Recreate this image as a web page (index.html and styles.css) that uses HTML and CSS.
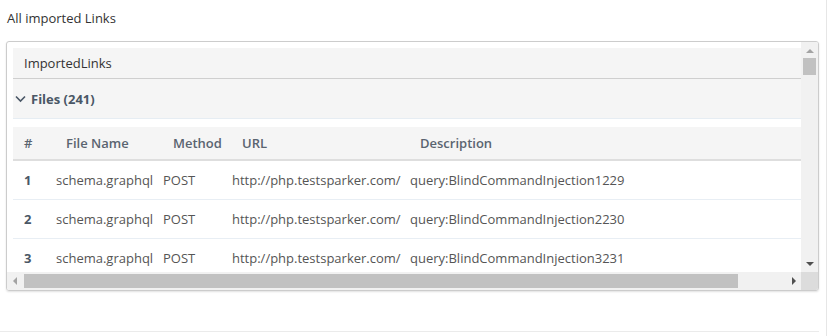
FILE: index.html
```html
<!DOCTYPE html>
<html lang="en">
  <head>
    <meta charset="UTF-8" />
    <title>All imported Links</title>
    <link rel="stylesheet" href="styles.css">
  </head>
  <body>
    <div class="page">
      <div class="page-title">All imported Links</div>

      <!-- Imported links panel -->
      <div class="panel">
        <div class="panel-view">
          <div class="panel-head">ImportedLinks</div>
          <div class="group-row">
            <svg class="chevron" width="11" height="8" viewBox="0 0 11 8">
              <path d="M1 1.5 L5.5 6 L10 1.5" fill="none" stroke="#4a5766" stroke-width="1.6" />
            </svg>
            <span>Files (241)</span>
          </div>

          <table class="links">
            <colgroup>
              <col style="width: 33px" />
              <col style="width: 107px" />
              <col style="width: 69px" />
              <col style="width: 178px" />
              <col style="width: 300px" />
              <col style="width: 170px" />
            </colgroup>
            <thead>
              <tr>
                <th class="num">#</th>
                <th>File Name</th>
                <th>Method</th>
                <th>URL</th>
                <th>Description</th>
                <th></th>
              </tr>
            </thead>
            <tbody>
              <tr>
                <td class="num">1</td>
                <td>schema.graphql</td>
                <td>POST</td>
                <td>http://php.testsparker.com/</td>
                <td>query:BlindCommandInjection1229</td>
                <td></td>
              </tr>
              <tr>
                <td class="num">2</td>
                <td>schema.graphql</td>
                <td>POST</td>
                <td>http://php.testsparker.com/</td>
                <td>query:BlindCommandInjection2230</td>
                <td></td>
              </tr>
              <tr>
                <td class="num">3</td>
                <td>schema.graphql</td>
                <td>POST</td>
                <td>http://php.testsparker.com/</td>
                <td>query:BlindCommandInjection3231</td>
                <td></td>
              </tr>
            </tbody>
          </table>
        </div>

        <!-- vertical scrollbar -->
        <div class="vscroll">
          <span class="arrow up"></span>
          <span class="vthumb"></span>
          <span class="vspace"></span>
          <span class="arrow down"></span>
        </div>

        <!-- horizontal scrollbar -->
        <div class="hscroll">
          <span class="arrow left"></span>
          <span class="hthumb"></span>
          <span class="arrow right"></span>
        </div>
        <div class="corner"></div>
      </div>

      <div class="footer-line"></div>
    </div>
  </body>
</html>
```

FILE: styles.css
```css
body {
  margin: 0;
  font-family: "Open Sans", Arial, sans-serif;
  font-size: 13px;
  color: #333;
  background: #fff;
}

.page {
  width: 827px;
  height: 336px;
  border-right: 1px solid #e6e6e6;
  padding-top: 9px;
  box-sizing: border-box;
}

.page-title {
  padding-left: 7px;
  line-height: 18px;
  color: #333;
}

/* Panel */
.panel {
  margin: 14px 0 0 6px;
  width: 813px;
  height: 250px;
  box-sizing: border-box;
  border: 1px solid #ccc;
  border-radius: 3px;
  box-shadow: 0 1px 2px rgba(0, 0, 0, 0.12);
  display: grid;
  grid-template-columns: 794px 17px;
  grid-template-rows: 230px 18px;
  overflow: hidden;
}

.panel-view {
  padding: 6px 0 0 6px;
  overflow: hidden;
}

.panel-head {
  height: 30px;
  line-height: 30px;
  padding-left: 11px;
  background: #f5f5f5;
  border-bottom: 1px solid #cfcfcf;
  color: #333;
}

.group-row {
  height: 39px;
  display: flex;
  align-items: center;
  gap: 5px;
  padding-left: 2px;
  background: #f5f5f5;
  border-bottom: 1px solid #e6edf3;
  font-weight: bold;
  color: #4a5766;
}

.links {
  margin-top: 8px;
  width: 857px;
  table-layout: fixed;
  border-collapse: collapse;
}

.links th {
  height: 32px;
  padding: 0 0 0 20px;
  text-align: left;
  font-weight: 600;
  color: #5a6470;
  background: #f5f5f5;
  border-bottom: 2px solid #dedede;
  white-space: nowrap;
}

.links td {
  height: 38px;
  padding: 0 0 0 10px;
  color: #555;
  border-bottom: 1px solid #e8eef4;
  white-space: nowrap;
}

.links .num {
  padding-left: 11px;
}

.links td.num {
  font-weight: bold;
  color: #4a5766;
}

/* Scrollbars */
.vscroll,
.hscroll {
  background: #f1f1f1;
  display: flex;
  align-items: center;
}

.vscroll {
  flex-direction: column;
  padding: 0 2px;
}

.hscroll {
  padding: 2px 0;
}

.vthumb {
  width: 13px;
  height: 17px;
  background: #c1c1c1;
}

.vspace {
  flex: 1;
}

.hthumb {
  height: 14px;
  width: 714px;
  margin-left: 7px;
  background: #c1c1c1;
}

.corner {
  background: #dcdcdc;
}

.arrow {
  width: 0;
  height: 0;
  border: 4px solid transparent;
}

.arrow.up {
  border-bottom-color: #a3a3a3;
  border-top-width: 0;
  margin: 7px 0 5px;
}

.arrow.down {
  border-top-color: #505050;
  border-bottom-width: 0;
  margin-bottom: 6px;
}

.arrow.left {
  border-right-color: #a3a3a3;
  border-left-width: 0;
  margin-left: 6px;
}

.arrow.right {
  border-left-color: #505050;
  border-right-width: 0;
  margin-left: 54px;
}

.footer-line {
  margin-top: 40px;
  width: 819px;
  border-top: 1px solid #ebebeb;
}
```
